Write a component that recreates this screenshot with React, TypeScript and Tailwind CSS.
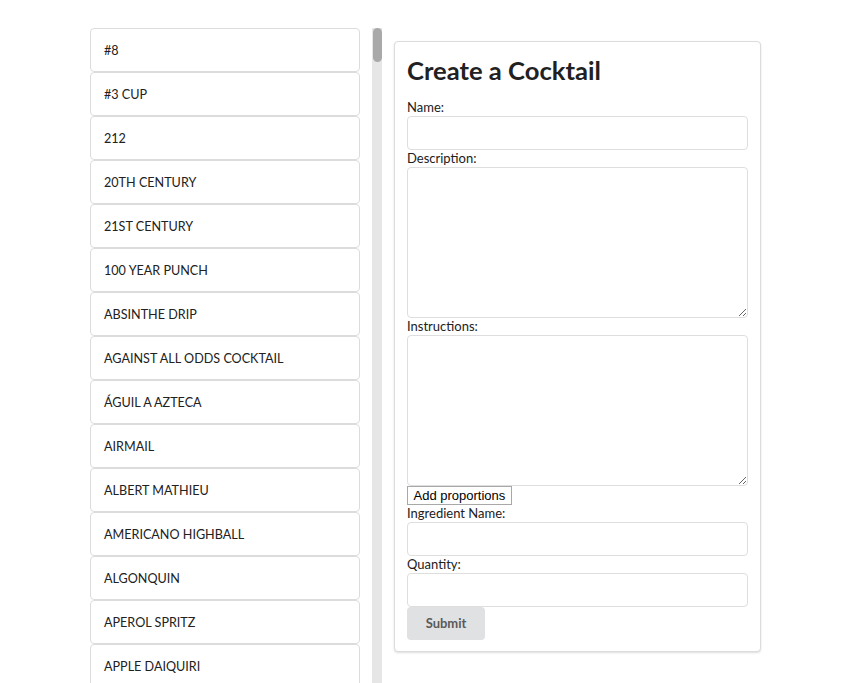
import React from 'react';

const cocktails = [
  "#8",
  "#3 CUP",
  "212",
  "20TH CENTURY",
  "21ST CENTURY",
  "100 YEAR PUNCH",
  "ABSINTHE DRIP",
  "AGAINST ALL ODDS COCKTAIL",
  "ÁGUIL A AZTECA",
  "AIRMAIL",
  "ALBERT MATHIEU",
  "AMERICANO HIGHBALL",
  "ALGONQUIN",
  "APEROL SPRITZ",
  "APPLE DAIQUIRI",
];

function Field({ label, area }: { label: string; area?: boolean }) {
  return (
    <div className="flex flex-col">
      <label className="h-[17px] leading-[17px] text-[13px]">{label}</label>
      {area ? (
        <textarea className="h-[151px] w-full rounded-[4px] border border-[#dededf] bg-white px-3 py-2 outline-none" />
      ) : (
        <input className="h-[34px] w-full rounded-[4px] border border-[#dededf] bg-white px-3 outline-none" />
      )}
    </div>
  );
}

export default function App() {
  return (
    <div className="font-['Lato','Liberation_Sans',sans-serif] text-[#212121] bg-white h-[683px] overflow-hidden">
      <div className="ml-[90px] flex w-[671px] items-start gap-[12px] pt-[28px]">
        <div className="flex h-[655px] w-[270px] flex-col overflow-hidden">
          {cocktails.map((c) => (
            <div
              key={c}
              className="flex h-[44px] shrink-0 items-center rounded-[4px] border border-[#dcdcdd] bg-white pl-[13px] pt-[2px] text-[12.6px]"
            >
              {c}
            </div>
          ))}
        </div>

        <div className="h-[655px] w-[10px] bg-[#e6e6e6]">
          <div className="mx-auto h-[34px] w-[9px] rounded-full bg-[#a9a9a9]" />
        </div>

        <div className="mt-[13px] w-[367px] rounded-[4px] border border-[#dcdcdd] bg-white px-[12px] pt-[12px] pb-[11px] shadow-[0_1px_2px_0_rgba(34,36,38,0.15)]">
          <h1 className="h-[45px] text-[25.6px] font-bold leading-[33px]">Create a Cocktail</h1>
          <Field label="Name:" />
          <Field label="Description:" area />
          <Field label="Instructions:" area />
          <div className="flex">
            <button className="h-[19px] border border-[#a8a8a8] bg-white px-[5.5px] font-['Liberation_Sans',Arial,sans-serif] text-[13px] leading-[17px] text-black">
              Add proportions
            </button>
          </div>
          <Field label="Ingredient Name:" />
          <Field label="Quantity:" />
          <button className="h-[33px] w-[78px] rounded-[4px] bg-[#e0e1e2] text-[13px] font-bold text-[#5a5a5a]">
            Submit
          </button>
        </div>
      </div>
    </div>
  );
}
